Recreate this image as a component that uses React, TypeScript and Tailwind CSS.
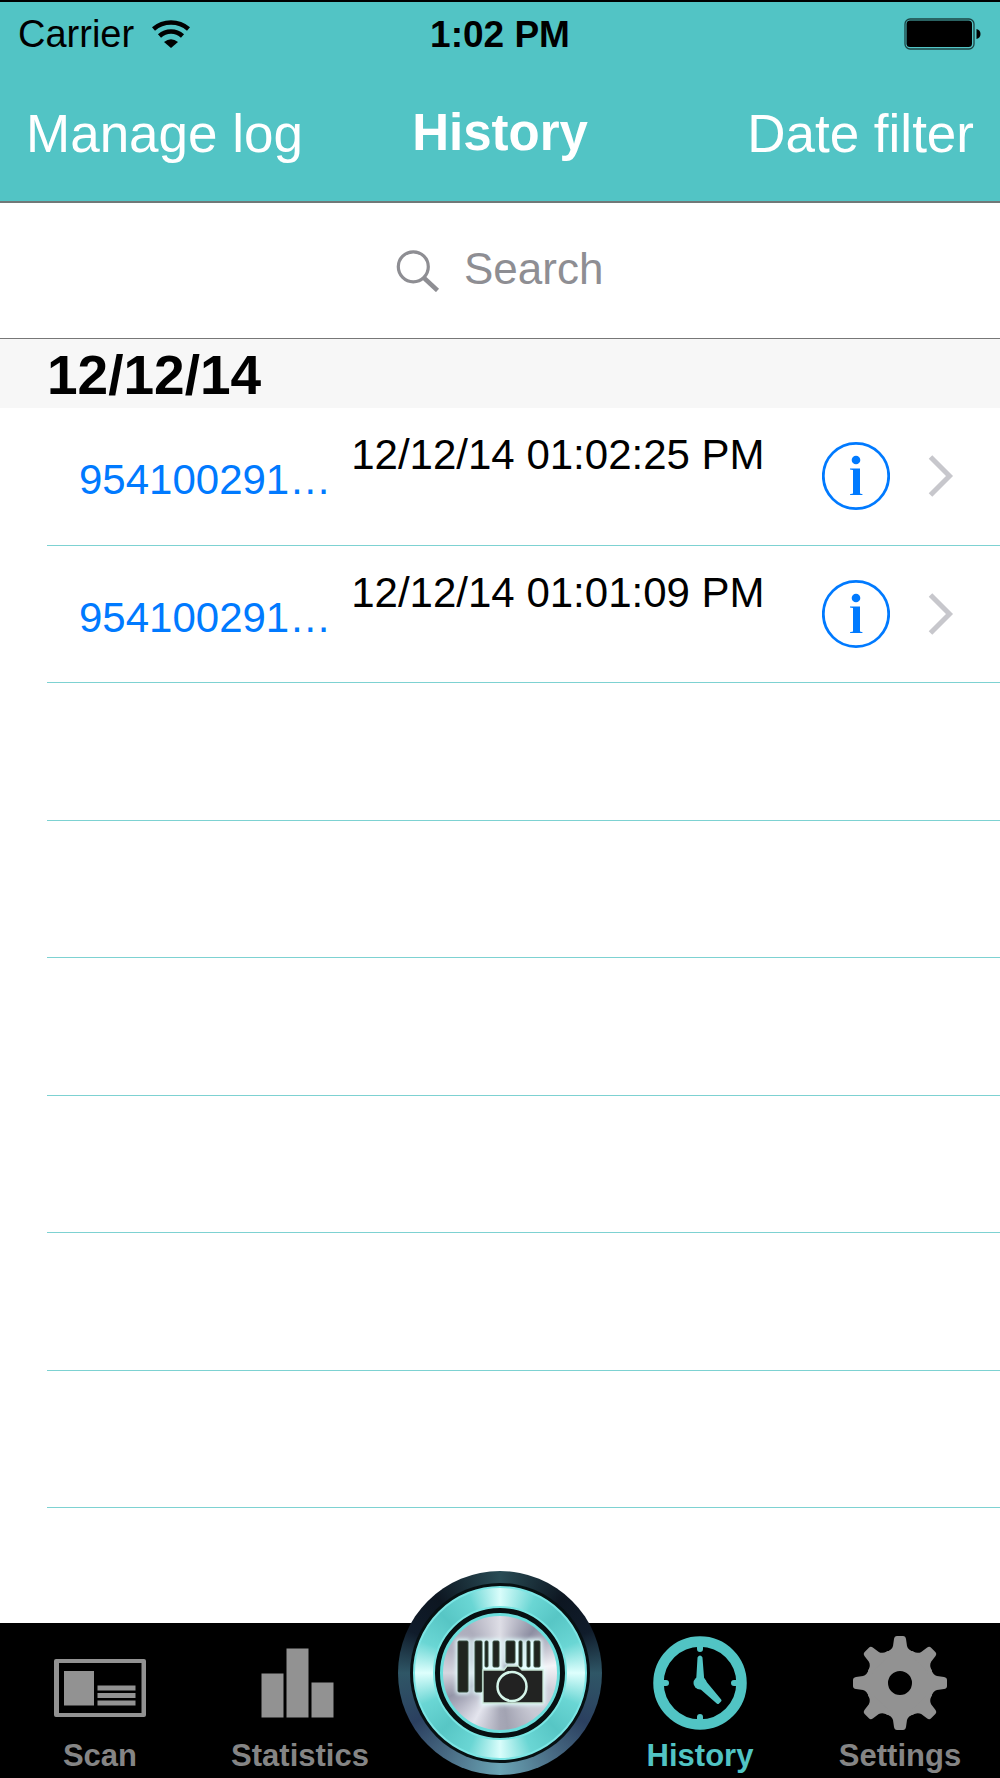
import { useState } from 'react'
import type { ReactNode } from 'react'

type LogEntry = {
  id: number
  code: string
  scannedAt: string
}

const entries: LogEntry[] = [
  { id: 1, code: '954100291…', scannedAt: '12/12/14 01:02:25 PM' },
  { id: 2, code: '954100291…', scannedAt: '12/12/14 01:01:09 PM' },
]

const emptyRows = [3, 4, 5, 6, 7, 8]

function WifiIcon() {
  return (
    <svg width="38" height="28" viewBox="0 0 38 28" aria-hidden="true">
      <g fill="none" stroke="#000" strokeWidth="4.6">
        <path d="M1.5 9Q9 2.500 19 2.500T36.500 9" />
        <path d="M7.500 16Q12.500 11.500 19 11.500T30.500 16" />
      </g>
      <path d="M12 22Q19 16.500 26 22L19 28Z" />
    </svg>
  )
}

function BatteryIcon() {
  return (
    <svg width="78" height="32" viewBox="0 0 78 32" aria-hidden="true">
      <rect x="1" y="1" width="69" height="30" rx="5" fill="none" stroke="#1c4444" strokeWidth="1.3" />
      <rect x="2.5" y="2.5" width="65.5" height="26.5" rx="3.5" />
      <path d="M72.500 11Q76.500 12 76.500 16T72.500 21Z" />
    </svg>
  )
}

function SearchIcon() {
  return (
    <svg width="44" height="42" viewBox="0 0 44 42" fill="none" stroke="#8e8e93" aria-hidden="true">
      <circle cx="17.3" cy="16.8" r="15" strokeWidth="3.2" />
      <path d="M27.500 27.500L41.500 40.500" strokeWidth="4.5" />
    </svg>
  )
}

function InfoIcon() {
  return (
    <svg width="68" height="70" viewBox="0 0 68 70" fill="#007aff" aria-hidden="true">
      <circle cx="34" cy="35" r="32.7" fill="none" stroke="#007aff" strokeWidth="2.8" />
      <circle cx="34" cy="19" r="4.300" />
      <path d="M28 27.500H38V52.500L40.500 53.200V54H28V53.200L31 52.500V29L28 28.500Z" />
    </svg>
  )
}

function Chevron() {
  return (
    <svg width="26" height="42" viewBox="0 0 26 42" aria-hidden="true">
      <path d="M2.500 2L21.500 21L2.500 40" fill="none" stroke="#c7c7cc" strokeWidth="5" />
    </svg>
  )
}

function ScanIcon() {
  return (
    <svg width="94" height="94" viewBox="0 0 94 94" fill="#929292" aria-hidden="true">
      <path fillRule="evenodd" d="M3 23H91Q93 23 93 25V79Q93 81 91 81H3Q1 81 1 79V25Q1 23 3 23ZM6 27V77H88.500V27Z" />
      <rect x="11" y="35" width="30" height="34.5" />
      <rect x="44.5" y="49.5" width="38" height="5" />
      <rect x="44.5" y="57" width="38" height="5" />
      <rect x="44.5" y="64.5" width="38" height="5" />
    </svg>
  )
}

function StatsIcon() {
  return (
    <svg width="94" height="94" viewBox="0 0 94 94" fill="#929292" aria-hidden="true">
      <rect x="8.500" y="37.5" width="22" height="44" />
      <rect x="33.5" y="12.5" width="22" height="69" />
      <rect x="58.5" y="46.5" width="22" height="35" />
    </svg>
  )
}

function ClockIcon() {
  return (
    <svg width="94" height="94" viewBox="0 0 94 94" stroke="#51c4c4" strokeLinecap="round" aria-hidden="true">
      <circle cx="47" cy="47" r="41.5" fill="none" strokeWidth="10.5" />
      <path d="M47 8V13M47 81V86M8 47H13M81 47H86" strokeWidth="6" />
      <path d="M44.500 47L46 22Q47 20 48 22L50 47Z" fill="#51c4c4" strokeWidth="3" />
      <path d="M45 49L65 66.500L67 64.500L50 44Z" fill="#51c4c4" strokeWidth="3" strokeLinejoin="round" />
      <circle cx="47" cy="47" r="6.5" fill="#51c4c4" stroke="none" />
    </svg>
  )
}

function GearIcon() {
  const angles = [0, 45, 90, 135, 180, 225, 270, 315]
  return (
    <svg width="94" height="94" viewBox="0 0 94 94" aria-hidden="true">
      <g fill="#929292">
        <path fillRule="evenodd" d="M47 13A34 34 0 1 1 47 81A34 34 0 1 1 47 13ZM47 35A12 12 0 1 0 47 59A12 12 0 1 0 47 35Z" />
        {angles.map((angle) => (
          <path key={angle} transform={`rotate(${angle} 47 47)`} d="M33 16Q39 14 40 10L41 3Q41.500 0 44 0H50Q52.500 0 53 3L54 10Q55 14 61 16L56 20H38Z" />
        ))}
      </g>
    </svg>
  )
}

function BarcodeCamera() {
  const bars = [
    [18, 27, 10, 51],
    [35, 27, 7, 51],
    [45, 27, 3, 26],
    [53, 27, 6, 26],
    [66, 27, 9, 22],
    [79, 27, 3, 26],
    [87, 27, 3, 26],
    [94, 27, 6, 26],
  ]
  return (
    <svg viewBox="0 0 114 114" className="size-full" aria-hidden="true">
      <defs>
        <filter id="glow" x="-20%" y="-20%" width="140%" height="140%">
          <feGaussianBlur stdDeviation="2" />
        </filter>
      </defs>
      <g transform="translate(-3 -2)">
        <g fill="#e4ffff" stroke="#e4ffff" strokeWidth="4" filter="url(#glow)">
          {bars.map(([x, y, w, h]) => (
            <rect key={x} x={x} y={y} width={w} height={h} />
          ))}
          <rect x="43" y="56" width="60" height="33" />
        </g>
        <g fill="#20251f" stroke="#344b3c" strokeWidth="1">
          {bars.map(([x, y, w, h]) => (
            <rect key={x} x={x} y={y} width={w} height={h} rx="1" />
          ))}
        </g>
        <path d="M43 56H64L67 52H78L82 56H103V89H43Z" fill="#222322" stroke="#c9e6d6" strokeWidth="1.3" />
        <circle cx="72" cy="72.5" r="14.5" fill="#222" stroke="#d5f5ea" strokeWidth="2.5" />
      </g>
    </svg>
  )
}

function ScanButton() {
  return (
    <button
      type="button"
      aria-label="Scan barcode"
      className="mb-[3px] grid size-[204px] place-items-center self-end justify-self-center rounded-full bg-[conic-gradient(#294c55,#0d1621_40deg,#101c2b_65deg,#2f5666_90deg,#2b4060_120deg,#4c7088_150deg,#6aa4b4_180deg,#4c7088_210deg,#2b4060_240deg,#2f5666_270deg,#101c2b_295deg,#0d1621_320deg,#294c55)]"
    >
      <span className="grid size-[180px] place-items-center rounded-full bg-[#071012]">
        <span className="grid size-[174px] place-items-center rounded-full border-2 border-[#7be5e4] bg-[conic-gradient(#d9fdfb,#6ad6d4_25deg,#57c6c5_45deg,#6ad6d4_68deg,#defffd_90deg,#6ad6d4_112deg,#57c6c5_135deg,#6ad6d4_158deg,#d9fdfb_180deg,#6ad6d4_202deg,#57c6c5_225deg,#6ad6d4_248deg,#defffd_270deg,#6ad6d4_292deg,#57c6c5_315deg,#6ad6d4_338deg,#d9fdfb)]">
          <span className="grid size-[134px] place-items-center rounded-full border-2 border-[#78e5e2] bg-[#071012]">
            <span className="grid size-[120px] place-items-center rounded-full border-3 border-[#6bdedc] bg-[conic-gradient(#dedee6,#8d8ea2_38deg,#b9b9c7_58deg,#f4f4f8_82deg,#cfcfda_108deg,#c8c9d4_140deg,#a2a3b2_172deg,#a7a8b7_180deg,#e4e5ee_208deg,#9495a8_245deg,#d5d6df_270deg,#b4b4c3_295deg,#adadbc_325deg,#dedee6)]">
              <BarcodeCamera />
            </span>
          </span>
        </span>
      </span>
    </button>
  )
}

type TabProps = {
  label: string
  active: boolean
  onSelect: () => void
  children: ReactNode
}

function Tab({ label, active, onSelect, children }: TabProps) {
  return (
    <button
      type="button"
      onClick={onSelect}
      aria-current={active ? 'page' : undefined}
      className={`flex flex-col items-center justify-end gap-2 pb-1 text-[31px] leading-9 font-bold ${active ? 'text-[#51c4c4]' : 'text-[#858585]'}`}
    >
      {children}
      {label}
    </button>
  )
}

export default function App() {
  const [query, setQuery] = useState('')
  const [tab, setTab] = useState('History')

  return (
    <div className="flex min-h-screen flex-col bg-white font-['Liberation_Sans',Arial,sans-serif] text-black">
      <header className="border-t-2 border-b-2 border-t-black border-b-[#717878] bg-[#52c4c5]">
        {/* Status bar */}
        <div className="grid h-16 grid-cols-[1fr_auto_1fr] items-center px-[18px] text-[38px] leading-none">
          <div className="flex items-center gap-[18px]">
            <span>Carrier</span>
            <WifiIcon />
          </div>
          <span className="text-[37px] font-bold whitespace-nowrap">1:02 PM</span>
          <div className="flex justify-end">
            <BatteryIcon />
          </div>
        </div>

        {/* Navigation bar */}
        <div className="grid h-[135px] grid-cols-[1fr_auto_1fr] items-center px-[26px] text-[53px] text-white">
          <button type="button" className="justify-self-start">Manage log</button>
          <h1 className="text-[51px] font-bold">History</h1>
          <button type="button" className="justify-self-end">Date filter</button>
        </div>
      </header>

      <main className="flex-1">
        <label className="flex h-[136px] items-center justify-center gap-6 border-b border-[#777]">
          <SearchIcon />
          <input
            type="text"
            aria-label="Search"
            placeholder="Search"
            value={query}
            onChange={(e) => setQuery(e.target.value)}
            className="w-[140px] bg-transparent pb-1 text-[44px] outline-none placeholder:text-[#8e8e93]"
          />
        </label>

        <section>
          <h2 className="flex h-[69px] items-center bg-[#f7f7f7] px-[47px] pt-1 text-[55px] leading-none font-bold">12/12/14</h2>
          <ul className="grid h-[1100px] grid-rows-8 pl-[47px]">
            {entries.map((entry) => (
              <li key={entry.id} className="flex items-center border-b border-[#7dd2d2] pr-[46px] pl-8">
                <a href="#entry" className="pt-2 text-[42px] leading-none text-[#007aff]">{entry.code}</a>
                <span className="flex-1 self-start pt-[26px] pl-5 text-[42px] leading-none whitespace-nowrap">{entry.scannedAt}</span>
                <button type="button" aria-label="Details">
                  <InfoIcon />
                </button>
                <button type="button" aria-label="Open" className="ml-[38px]">
                  <Chevron />
                </button>
              </li>
            ))}
            {emptyRows.map((row) => (
              <li key={row} className="border-b border-[#7dd2d2]" />
            ))}
          </ul>
        </section>
      </main>

      {/* Tab bar */}
      <nav className="grid h-[155px] grid-cols-5 grid-rows-1 bg-black">
        <Tab label="Scan" active={tab === 'Scan'} onSelect={() => setTab('Scan')}>
          <ScanIcon />
        </Tab>
        <Tab label="Statistics" active={tab === 'Statistics'} onSelect={() => setTab('Statistics')}>
          <StatsIcon />
        </Tab>
        <ScanButton />
        <Tab label="History" active={tab === 'History'} onSelect={() => setTab('History')}>
          <ClockIcon />
        </Tab>
        <Tab label="Settings" active={tab === 'Settings'} onSelect={() => setTab('Settings')}>
          <GearIcon />
        </Tab>
      </nav>
    </div>
  )
}
